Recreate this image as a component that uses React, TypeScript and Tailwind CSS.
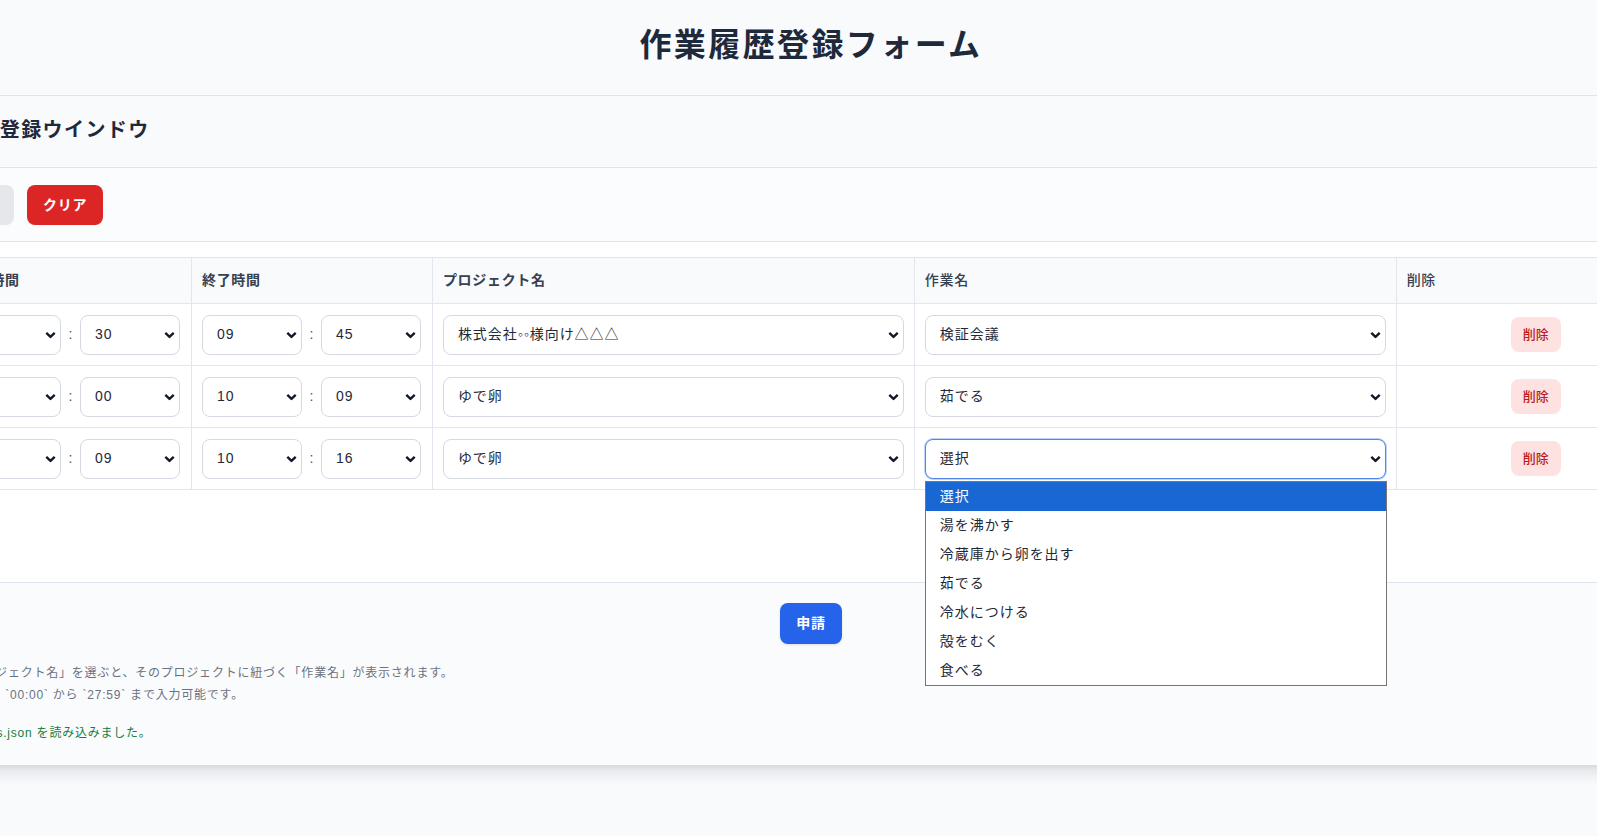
import React from 'react';

const Chevron: React.FC = () => (
  <svg
    className="pointer-events-none absolute right-[5px] top-1/2 -translate-y-1/2"
    width="11"
    height="7"
    viewBox="0 0 11 7"
    fill="none"
  >
    <path d="M1.3 1.3 5.5 5.4 9.7 1.3" stroke="#111827" strokeWidth="2.4" />
  </svg>
);

type SelectProps = {
  value: string;
  options: string[];
  className?: string;
  focused?: boolean;
};

const Select: React.FC<SelectProps> = ({ value, options, className = '', focused }) => (
  <div className={`relative ${className}`}>
    <select
      defaultValue={value}
      className={`h-10 w-full appearance-none rounded-lg bg-white pl-[14px] pr-6 text-[14px] tracking-[0.07em] text-[#1f2937] outline-none ${
        focused ? 'border border-[#4f86e8] ring-1 ring-[#bcd3fa]' : 'border border-[#d4d9e2]'
      }`}
    >
      {options.map((o) => (
        <option key={o} value={o}>
          {o}
        </option>
      ))}
    </select>
    <Chevron />
  </div>
);

const hours = Array.from({ length: 28 }, (_, i) => String(i).padStart(2, '0'));
const minutes = Array.from({ length: 60 }, (_, i) => String(i).padStart(2, '0'));
const projects = ['選択', '株式会社◦◦様向け△△△', 'ゆで卵'];
const eggTasks = ['選択', '湯を沸かす', '冷蔵庫から卵を出す', '茹でる', '冷水につける', '殻をむく', '食べる'];
const tasks = [...eggTasks, '検証会議'];

const rows = [
  { sh: '09', sm: '30', eh: '09', em: '45', project: '株式会社◦◦様向け△△△', task: '検証会議' },
  { sh: '10', sm: '00', eh: '10', em: '09', project: 'ゆで卵', task: '茹でる' },
  { sh: '10', sm: '09', eh: '10', em: '16', project: 'ゆで卵', task: '選択', open: true },
];

const TimePair: React.FC<{ h: string; m: string }> = ({ h, m }) => (
  <div className="flex items-center">
    <Select value={h} options={hours} className="w-[100px]" />
    <span className="w-[19px] text-center text-[14px] text-[#4b5563]">:</span>
    <Select value={m} options={minutes} className="w-[100px]" />
  </div>
);

const App: React.FC = () => {
  return (
    <div className="h-[836px] w-[1597px] overflow-hidden bg-[#f8fafc] font-['Liberation_Sans','Noto_Sans_CJK_JP',sans-serif] text-[#1f2937]">
      <div className="ml-[-66px] w-[1754px] bg-white shadow-[0_10px_15px_-3px_rgba(15,23,42,0.12),0_4px_6px_-4px_rgba(15,23,42,0.1)]">
        <header className="flex h-[96px] items-center justify-center border-b border-[#dfe4ec] bg-[#f8fafc] pb-[5px]">
          <h1 className="text-[32px] font-bold tracking-[0.075em] text-[#1e293b]">作業履歴登録フォーム</h1>
        </header>

        <div className="flex h-[72px] items-center border-b border-[#dfe4ec] bg-[#f8fafc] px-[23px] pb-[3px]">
          <h2 className="text-[20px] font-bold tracking-[0.07em] text-[#1e293b]">作業登録ウインドウ</h2>
        </div>

        <div className="flex items-center gap-[13px] border-b border-[#dfe4ec] bg-[#fbfcfe] px-4 pb-4 pt-[17px]">
          <button className="h-10 w-[64px] rounded-lg bg-[#e5e7eb] text-[14px] font-bold text-[#374151]">追加</button>
          <button className="h-10 rounded-lg bg-[#dc2626] px-4 text-[14px] font-bold tracking-[0.05em] text-white">クリア</button>
        </div>

        <div className="px-4 pb-[92px] pt-[15px]">
          <table className="w-full table-fixed border-collapse text-left">
            <colgroup>
              <col className="w-[14%]" />
              <col className="w-[14%]" />
              <col className="w-[28%]" />
              <col className="w-[28%]" />
              <col className="w-[16%]" />
            </colgroup>
            <thead>
              <tr className="h-[46px] bg-[#f8fafc] text-[14px] tracking-[0.05em] text-[#374151]">
                <th className="border border-[#e2e7ef] px-[10px] font-bold">開始時間</th>
                <th className="border border-[#e2e7ef] px-[10px] font-bold">終了時間</th>
                <th className="border border-[#e2e7ef] px-[10px] font-bold">プロジェクト名</th>
                <th className="border border-[#e2e7ef] px-[10px] font-medium">作業名</th>
                <th className="border border-[#e2e7ef] px-[10px] font-medium">削除</th>
              </tr>
            </thead>
            <tbody>
              {rows.map((r, i) => (
                <tr key={i} className="h-[62px]">
                  <td className="border border-[#e2e7ef] px-[10px]">
                    <TimePair h={r.sh} m={r.sm} />
                  </td>
                  <td className="border border-[#e2e7ef] px-[10px]">
                    <TimePair h={r.eh} m={r.em} />
                  </td>
                  <td className="border border-[#e2e7ef] px-[10px]">
                    <Select value={r.project} options={projects} />
                  </td>
                  <td className="border border-[#e2e7ef] px-[10px]">
                    <div className="relative">
                      <Select value={r.task} options={tasks} focused={r.open} />
                      {r.open && (
                        <ul className="absolute left-0 top-[calc(100%+2px)] z-10 w-[calc(100%+1px)] border border-[#767676] bg-white text-[14px] tracking-[0.07em] text-[#1f2937]">
                          {eggTasks.map((t, j) => (
                            <li
                              key={t}
                              className={`flex h-[29px] items-center pl-[14px] ${j === 0 ? 'bg-[#1967d2] text-white' : ''}`}
                            >
                              {t}
                            </li>
                          ))}
                        </ul>
                      )}
                    </div>
                  </td>
                  <td className="border border-[#e2e7ef] pl-[14px] pr-[10px] text-center">
                    <button className="h-[35px] rounded-lg bg-[#fee2e2] px-3 text-[13px] font-medium text-[#b91c1c]">削除</button>
                  </td>
                </tr>
              ))}
            </tbody>
          </table>
        </div>

        <div className="border-t border-[#dfe4ec] bg-[#fafbfd] px-4 pb-[21px] pt-5">
          <div className="flex justify-center">
            <button className="h-[41px] rounded-lg bg-[#2563eb] px-4 text-[14px] font-bold tracking-[0.05em] text-white shadow-sm">申請</button>
          </div>
          <div className="mt-[18px] text-[12px] leading-[22px] tracking-[0.065em] text-[#6b7280]">
            <p>・「プロジェクト名」を選ぶと、そのプロジェクトに紐づく「作業名」が表示されます。</p>
            <p>・時間は `00:00` から `27:59` まで入力可能です。</p>
            <p className="-ml-[4px] mt-4 text-[#15803d]">✓projects.json を読み込みました。</p>
          </div>
        </div>
      </div>
    </div>
  );
};

export default App;
